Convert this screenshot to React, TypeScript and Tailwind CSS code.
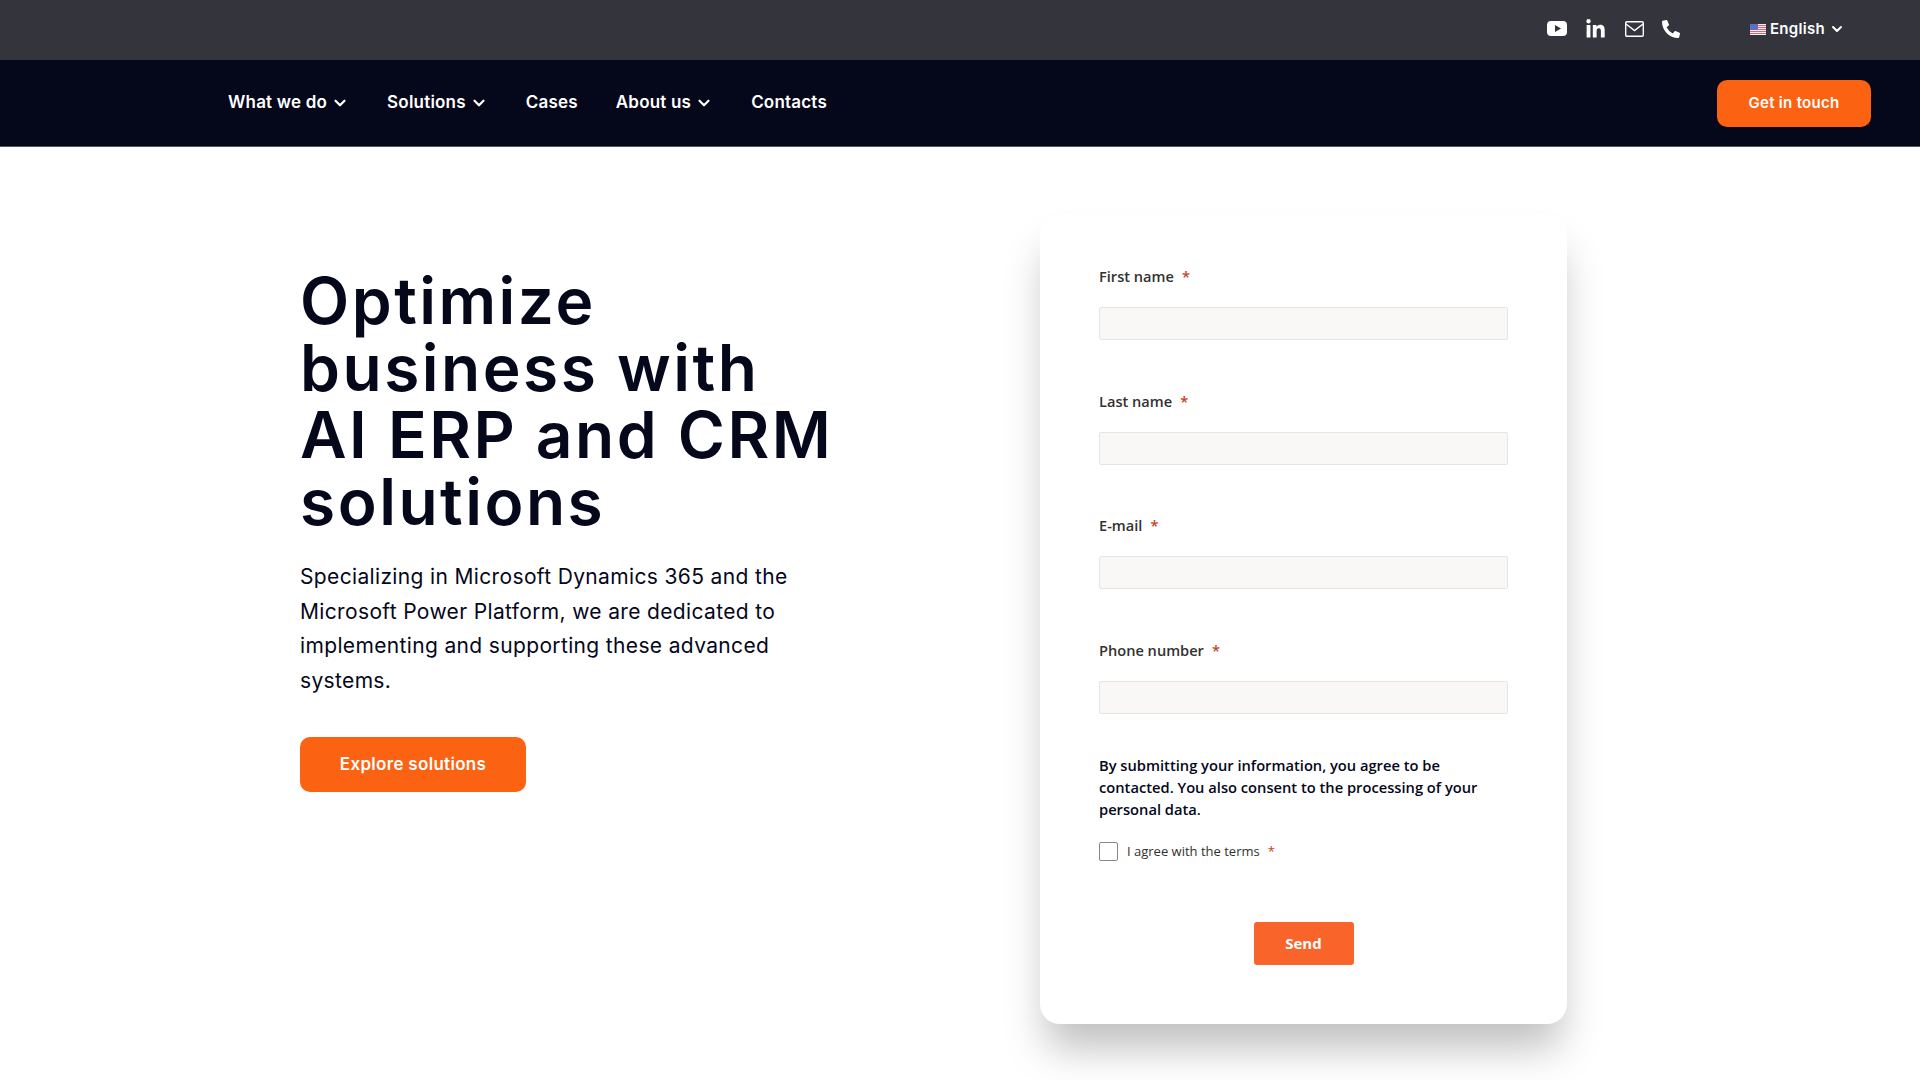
import { ChevronDown } from 'lucide-react'
import { FaLinkedinIn, FaPhoneAlt } from 'react-icons/fa'

const NAV_ITEMS = [
  { label: 'What we do', menu: true },
  { label: 'Solutions', menu: true },
  { label: 'Cases', menu: false },
  { label: 'About us', menu: true },
  { label: 'Contacts', menu: false },
]

const FIELDS = ['First name', 'Last name', 'E-mail', 'Phone number']

function YoutubeIcon() {
  return (
    <svg width="20" height="15" viewBox="0 0 20 15" className="-mt-[2px]" aria-hidden>
      <path
        fillRule="evenodd"
        fill="#fff"
        d="M4 0h12a4 4 0 0 1 4 4v7a4 4 0 0 1-4 4H4a4 4 0 0 1-4-4V4a4 4 0 0 1 4-4zm4 4v7l6-3.5z"
      />
    </svg>
  )
}

function MailIcon() {
  return (
    <svg width="19" height="16" viewBox="0 0 19 16" fill="none" stroke="#fff" strokeWidth="1.4" aria-hidden>
      <rect x="0.7" y="0.7" width="17.6" height="14.6" rx="1.2" />
      <path d="M1 3l8.5 6.5L18 3" />
    </svg>
  )
}

function FlagIcon() {
  return (
    <svg width="16" height="11" viewBox="0 0 16 11" aria-hidden>
      <rect width="16" height="11" fill="#f3f4f6" />
      <path d="M0 1h16v1H0zM0 3h16v1H0zM0 5h16v1H0zM0 7h16v1H0zM0 9h16v1H0z" fill="#e8606a" />
      <rect width="8" height="6" fill="#5b6fc4" />
    </svg>
  )
}

function FormField({ label }: { label: string }) {
  return (
    <div>
      <label className="block text-[14.6px] leading-5 font-semibold text-[#323130]">
        {label}
        <span className="ml-2 text-[#c8401c]">*</span>
      </label>
      <div className="mt-[21px] h-[33px] rounded-[2px] border border-[#e6e5e3] bg-[#f9f8f6]" />
    </div>
  )
}

export default function App() {
  return (
    <div className="min-h-[1080px] bg-white font-['Inter',sans-serif]">
      <div className="flex h-[60px] items-center justify-end bg-[#33343c] pr-[75px] pb-[2px] text-white">
        <div className="flex items-center gap-[18.4px]">
          <YoutubeIcon />
          <FaLinkedinIn size={21} />
          <MailIcon />
          <FaPhoneAlt size={18} />
        </div>
        <div className="ml-[70px] flex items-center">
          <FlagIcon />
          <span className="ml-[4px] text-[15px] font-semibold tracking-[0.3px]">English</span>
          <ChevronDown size={16} strokeWidth={3} className="ml-[4px]" />
        </div>
      </div>

      <header className="flex h-[87px] items-center justify-between border-b border-[#55566a] bg-[#05071b] pr-[49px] pl-[228px] text-white">
        <nav className="flex items-center gap-[38px] text-[17px] font-semibold tracking-[0.2px]">
          {NAV_ITEMS.map((item) => (
            <a key={item.label} className="flex items-center gap-[4px]">
              {item.label}
              {item.menu && <ChevronDown size={18} strokeWidth={3} />}
            </a>
          ))}
        </nav>
        <a className="flex h-[47px] w-[154px] items-center justify-center rounded-[10px] bg-[#fb6212] text-[15px] font-semibold tracking-[0.3px]">
          Get in touch
        </a>
      </header>

      <main className="flex pt-[68px] pl-[300px]">
        <section className="w-[740px] pt-[52px]">
          <h1 className="text-[64px] leading-[67px] font-semibold tracking-[2.5px] text-[#05071b]">
            Optimize
            <br />
            business with
            <br />
            AI ERP and CRM
            <br />
            solutions
          </h1>
          <p className="mt-[25px] w-[530px] text-[21px] leading-[34.6px] tracking-[0.35px] text-[#05071b]">
            Specializing in Microsoft Dynamics 365 and the Microsoft Power Platform, we are dedicated to
            implementing and supporting these advanced systems.
          </p>
          <a className="mt-[39px] flex h-[55px] w-[226px] items-center justify-center rounded-[10px] bg-[#fb6212] text-[17px] font-semibold tracking-[0.3px] text-white">
            Explore solutions
          </a>
        </section>

        <section className="h-[809px] w-[527px] rounded-[20px] bg-white px-[59px] pt-[51px] font-['Open_Sans',sans-serif] shadow-[0_30px_40px_-6px_rgba(0,0,0,0.25)]">
          <div className="flex flex-col gap-[50.5px]">
            {FIELDS.map((field) => (
              <FormField key={field} label={field} />
            ))}
          </div>
          <p className="mt-[40px] text-[14.7px] leading-[22px] font-semibold text-[#05071b]">
            By submitting your information, you agree to be contacted. You also consent to the processing of
            your personal data.
          </p>
          <div className="mt-[22.5px] flex items-center">
            <span className="h-[19px] w-[19px] rounded-[2px] border border-[#8a8886] bg-white" />
            <span className="ml-[9px] text-[13px] text-[#323130]">I agree with the terms</span>
            <span className="ml-2 text-[13px] text-[#c8401c]">*</span>
          </div>
          <div className="mt-[60px] flex justify-center">
            <a className="flex h-[43px] w-[100px] items-center justify-center rounded-[3px] bg-[#f9642a] text-[15px] font-bold text-white">
              Send
            </a>
          </div>
        </section>
      </main>
    </div>
  )
}
